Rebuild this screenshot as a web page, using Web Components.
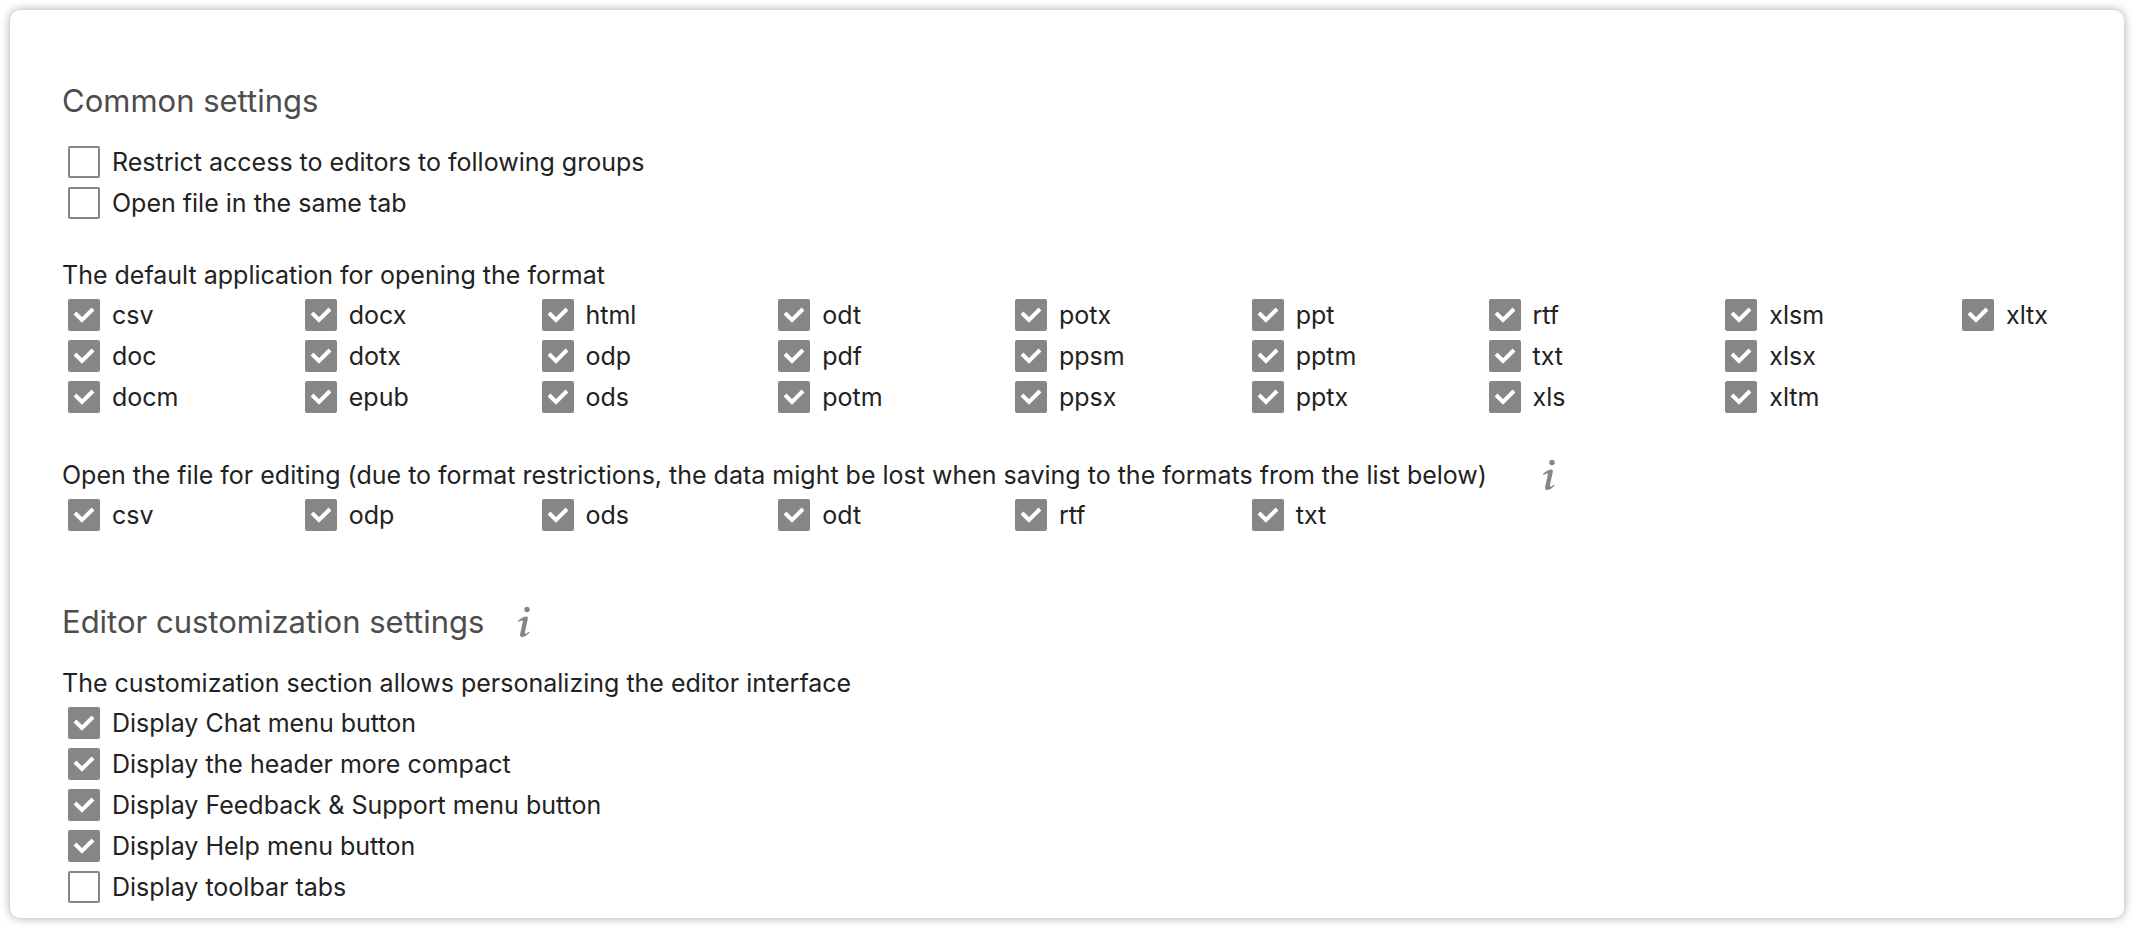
<!DOCTYPE html>
<html lang="en">
<head>
<meta charset="utf-8">
<title>Editor settings</title>
<style>
  html, body { margin: 0; background: #fff; }
  body { padding: 10px; color: #222; font: 25px/40px Inter, "Liberation Sans", sans-serif; }
</style>
</head>
<body>
<settings-card>
  <settings-heading>Common settings</settings-heading>
  <check-list items="Restrict access to editors to following groups|Open file in the same tab" checked=""></check-list>

  <settings-note class="formats">The default application for opening the format</settings-note>
  <check-list columns items="csv|doc|docm|docx|dotx|epub|html|odp|ods|odt|pdf|potm|potx|ppsm|ppsx|ppt|pptm|pptx|rtf|txt|xls|xlsm|xlsx|xltm|xltx" checked="all"></check-list>

  <settings-note class="editing">Open the file for editing (due to format restrictions, the data might be lost when saving to the formats from the list below)<info-button slot="info"></info-button></settings-note>
  <check-list columns row items="csv|odp|ods|odt|rtf|txt" checked="all"></check-list>

  <settings-heading class="section">Editor customization settings<info-button slot="info"></info-button></settings-heading>
  <settings-note>The customization section allows personalizing the editor interface</settings-note>
  <check-list items="Display Chat menu button|Display the header more compact|Display Feedback &amp; Support menu button|Display Help menu button|Display toolbar tabs" checked="4"></check-list>
</settings-card>

<script>
class SettingsCard extends HTMLElement {
  constructor() {
    super();
    this.attachShadow({ mode: 'open' }).innerHTML = `
      <style>
        :host { display: block; box-sizing: border-box; padding: 71px 52px 11px; background: #fff;
                border-radius: 10px; box-shadow: 0 0 10px rgba(77, 77, 77, .5); }
        ::slotted(.formats) { margin-top: 32px; }
        ::slotted(.editing) { margin-top: 38px; }
        ::slotted(.section) { margin-top: 67px; }
      </style>
      <slot></slot>`;
  }
}

class SettingsHeading extends HTMLElement {
  constructor() {
    super();
    this.attachShadow({ mode: 'open' }).innerHTML = `
      <style>
        :host { display: flex; align-items: center; gap: 32px; margin-bottom: 21px; color: #4d4d4d; }
        h2 { margin: 0; font-size: 31px; font-weight: 400; line-height: 40px; }
      </style>
      <h2><slot></slot></h2><slot name="info"></slot>`;
  }
}

class SettingsNote extends HTMLElement {
  constructor() {
    super();
    this.attachShadow({ mode: 'open' }).innerHTML = `
      <style>
        :host { display: flex; align-items: center; gap: 54px; }
        p { margin: 0; }
      </style>
      <p><slot></slot></p><slot name="info"></slot>`;
  }
}

class InfoButton extends HTMLElement {
  constructor() {
    super();
    this.attachShadow({ mode: 'open' }).innerHTML = `
      <style>
        :host { display: block; }
        button { display: block; margin: 0; padding: 0; border: 0; background: none; cursor: pointer; }
        svg { display: block; fill: #868686; }
      </style>
      <button type="button" aria-label="More information">
        <svg width="16" height="32" viewBox="0 0 16 32">
          <circle cx="11" cy="3.500" r="2.700"/>
          <path d="M2 15C5 12 8 10.500 10.500 10.500C12 10.500 12 12 11.700 13.500L9 26C8.800 27.500 9.500 28 10.500 27.500L13 25.500L13.500 26.500C11 29.500 8 31 6 31C4 31 3.800 29.500 4.200 27.500L6.800 16C7 14.500 6.200 14 5 14.700L2.500 16Z"/>
        </svg>
      </button>`;
  }
}

class CheckItem extends HTMLElement {
  connectedCallback() {
    if (this.shadowRoot) return;
    this.attachShadow({ mode: 'open' }).innerHTML = `
      <style>
        :host { display: block; }
        label { display: flex; align-items: center; gap: 12px; padding-left: 6px; cursor: pointer; }
        .box { display: grid; flex: none; width: 32px; height: 32px; }
        input, svg { grid-area: 1 / 1; }
        input { appearance: none; margin: 0; box-sizing: border-box; width: 32px; height: 32px;
                border: 2px solid #868686; border-radius: 2px; background: #fff; }
        input:checked { background: #868686; }
        svg { fill: none; stroke: #fff; stroke-width: 4; pointer-events: none; visibility: hidden; }
        input:checked + svg { visibility: visible; }
      </style>
      <label><span class="box"><input type="checkbox"><svg width="32" height="32" viewBox="0 0 32 32"><path d="M7 14L14 21L25 10"/></svg></span><span><slot></slot></span></label>`;
    this.shadowRoot.querySelector('input').checked = this.hasAttribute('checked');
  }
}

class CheckList extends HTMLElement {
  connectedCallback() {
    if (this.shadowRoot) return;
    const items = this.getAttribute('items').split('|');
    const checked = this.getAttribute('checked');
    const count = checked === 'all' ? items.length : Number(checked);
    this.attachShadow({ mode: 'open' }).innerHTML = `
      <style>
        :host { display: grid; row-gap: 1px; }
        :host([columns]) { grid-template-columns: repeat(8, minmax(0, 1fr)) 116px;
                           grid-template-rows: repeat(3, auto); grid-auto-flow: column; }
        :host([row]) { grid-template-rows: auto; }
      </style>`;
    items.forEach((text, index) => {
      const item = document.createElement('check-item');
      item.textContent = text;
      item.toggleAttribute('checked', index < count);
      this.shadowRoot.append(item);
    });
  }
}

customElements.define('settings-card', SettingsCard);
customElements.define('settings-heading', SettingsHeading);
customElements.define('settings-note', SettingsNote);
customElements.define('info-button', InfoButton);
customElements.define('check-item', CheckItem);
customElements.define('check-list', CheckList);
</script>
</body>
</html>
